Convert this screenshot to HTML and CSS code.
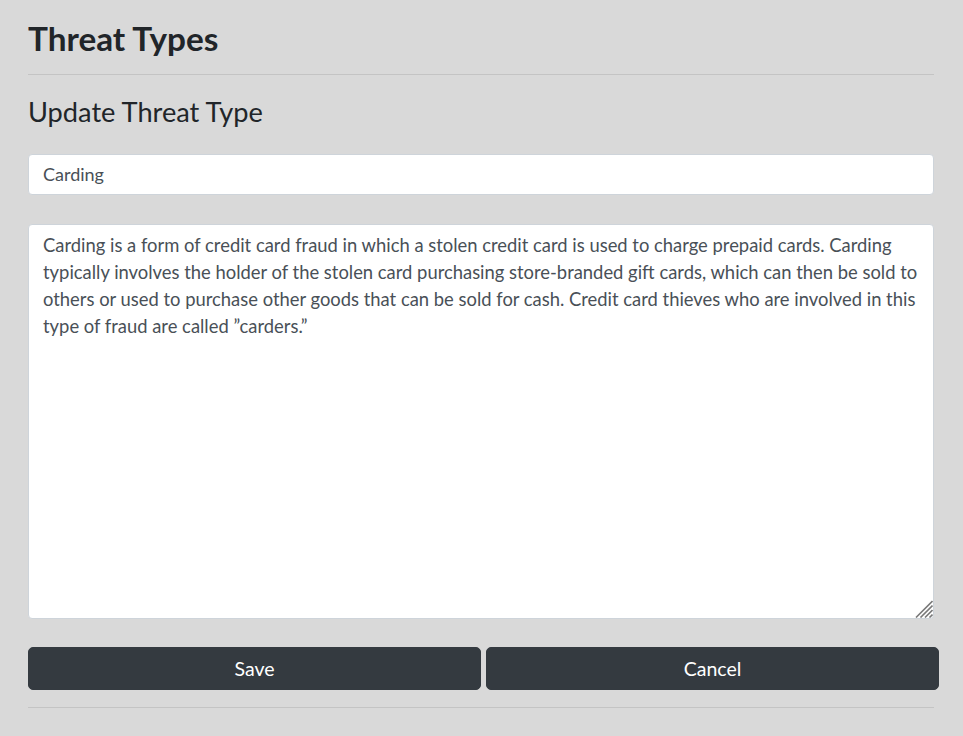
FILE: index.html
```html
<!DOCTYPE html>
<html lang="en">
<head>
<meta charset="utf-8">
<title>Threat Types</title>
<link rel="stylesheet" href="styles.css">
</head>
<body>
<main class="page">
  <h1 class="page-title">Threat Types</h1>
  <hr class="divider">
  <h2 class="section-title">Update Threat Type</h2>
  <form class="threat-form">
    <input class="field field-name" type="text" value="Carding">
    <div class="desc-wrap">
      <textarea class="field field-desc">Carding is a form of credit card fraud in which a stolen credit card is used to charge prepaid cards. Carding typically involves the holder of the stolen card purchasing store-branded gift cards, which can then be sold to others or used to purchase other goods that can be sold for cash. Credit card thieves who are involved in this type of fraud are called ”carders.”</textarea>
      <svg class="grip" width="18" height="18" viewBox="0 0 18 18" aria-hidden="true">
        <path d="M17.5 1 L1 17.5 M17.5 5.5 L5.5 17.5 M17.5 10 L10 17.5 M17.5 14.5 L14.5 17.5" stroke="#7a7a7a" stroke-width="1.6" fill="none"/>
      </svg>
    </div>
    <div class="actions">
      <button type="button" class="btn">Save</button>
      <button type="button" class="btn">Cancel</button>
    </div>
  </form>
  <hr class="divider divider-bottom">
</main>
</body>
</html>
```

FILE: styles.css
```css
* {
  box-sizing: border-box;
}

html, body {
  margin: 0;
  padding: 0;
  background: #d9d9d9;
}

body {
  font-family: Lato, "Open Sans", sans-serif;
  color: #212529;
}

.page {
  padding: 19px 29px 0 28px;
}

.page-title {
  margin: 0;
  font-size: 33.3px;
  line-height: 1.2;
  font-weight: 700;
  color: #212529;
}

.divider {
  margin: 15px 0 0;
  border: 0;
  border-top: 1px solid #c4c4c4;
  height: 0;
}

.section-title {
  margin: 21px 0 0;
  font-size: 27.2px;
  line-height: 1.2;
  font-weight: 400;
  color: #212529;
}

.threat-form {
  display: flex;
  flex-direction: column;
  margin-top: 25px;
}

.field {
  display: block;
  width: 100%;
  font-family: Lato, "Open Sans", sans-serif;
  font-size: 18px;
  color: #495057;
  background: #fff;
  border: 1px solid #ced4da;
  border-radius: 4px;
  outline: none;
}

.field-name {
  height: 41px;
  padding: 6px 14px;
  line-height: 27px;
}

.desc-wrap {
  position: relative;
  margin-top: 29px;
}

.field-desc {
  height: 395px;
  padding: 7px 14px 6px;
  font-size: 18.4px;
  line-height: 27.3px;
  resize: none;
}

.grip {
  position: absolute;
  right: 1px;
  bottom: 1px;
  pointer-events: none;
}

.actions {
  display: flex;
  gap: 5px;
  margin-top: 28px;
  width: calc(100% + 5px);
}

.btn {
  flex: 1 1 0;
  height: 43px;
  font-family: Lato, "Open Sans", sans-serif;
  font-size: 19.5px;
  color: #fff;
  background: #343a40;
  border: 1px solid #343a40;
  border-radius: 5px;
  cursor: pointer;
}

.divider-bottom {
  margin-top: 17px;
}
```
